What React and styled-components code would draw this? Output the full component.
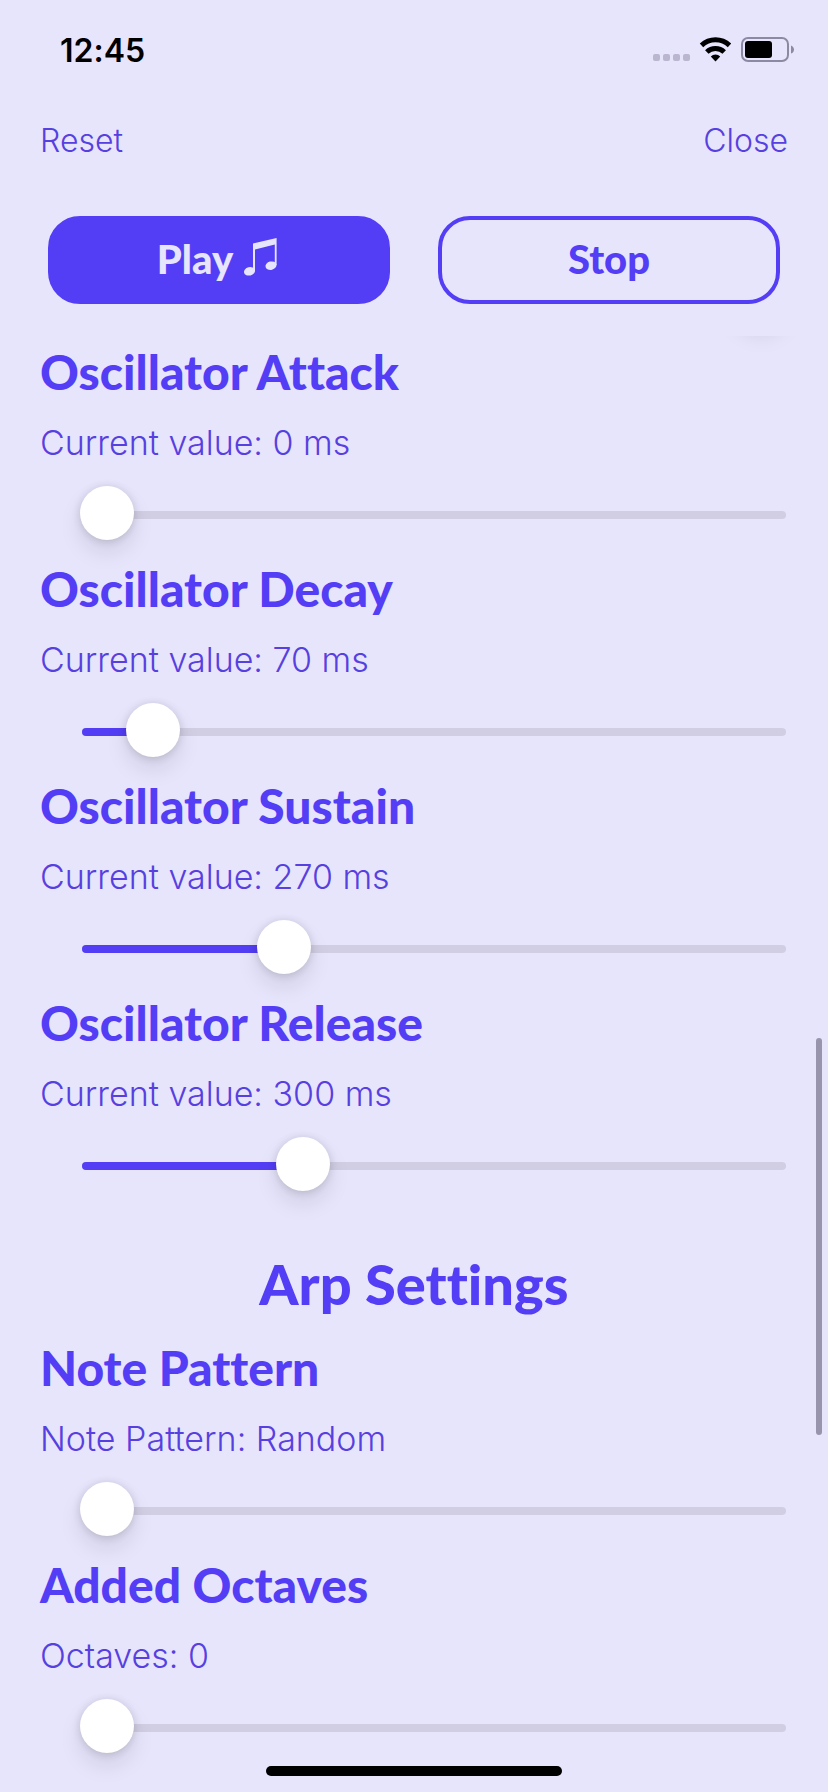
import React from 'react';
import styled, { createGlobalStyle } from 'styled-components';

const COLORS = {
	background: '#e7e5fc',
	primary: '#543ef5',
	text: '#5740e0',
	track: '#d1cee4',
	scrollbar: '#9894ad',
	signal: '#bab6d0',
	battery: '#8d89a2',
	white: '#ffffff',
	black: '#000000',
};

const FONTS = {
	heading: "Lato, 'Open Sans', sans-serif",
	body: "Inter, 'Open Sans', sans-serif",
};

const THUMB_SIZE = 54;

const OSCILLATOR = [
	{ id: 'attack', title: 'Oscillator Attack', value: 0 },
	{ id: 'decay', title: 'Oscillator Decay', value: 70 },
	{ id: 'sustain', title: 'Oscillator Sustain', value: 270 },
	{ id: 'release', title: 'Oscillator Release', value: 300 },
];

const PATTERNS = ['Random', 'Up', 'Down', 'Up & Down'];

const Setting = ({ id, title, initial, max, format }) => {
	const [value, setValue] = React.useState(initial);
	const ratio = value / max;

	return (
		<SettingWrapper>
			<SettingTitle>
				<label htmlFor={id}>{title}</label>
			</SettingTitle>
			<Caption>{format(value)}</Caption>
			<SliderWrapper>
				<Track>
					<Fill style={{ width: `${ratio * 100}%` }} />
				</Track>
				<Range
					id={id}
					type="range"
					min={0}
					max={max}
					value={value}
					onChange={(event) => setValue(Number(event.target.value))}
				/>
			</SliderWrapper>
		</SettingWrapper>
	);
};

const StatusIcons = () => (
	<svg width="142" height="26" viewBox="0 0 142 26" aria-hidden="true">
		<g fill={COLORS.signal}>
			<rect x="0" y="17" width="7" height="7" rx="2" />
			<rect x="10" y="17" width="7" height="7" rx="2" />
			<rect x="20" y="17" width="7" height="7" rx="2" />
			<rect x="30" y="17" width="7" height="7" rx="2" />
		</g>
		<g fill="none" stroke={COLORS.black} strokeWidth="5">
			<path d="M48.5 8.4A20.4 20.4 0 0 1 76.5 8.4" />
			<path d="M53.8 15A12.6 12.6 0 0 1 71.2 15" />
		</g>
		<path d="M62.5 24.4L57.8 19.4A6.8 6.8 0 0 1 67.2 19.4Z" fill={COLORS.black} />
		<rect
			x="89"
			y="1"
			width="46"
			height="23"
			rx="6"
			fill="none"
			stroke={COLORS.battery}
			strokeWidth="2"
		/>
		<rect x="92" y="4" width="27" height="17" rx="3" fill={COLORS.black} />
		<path d="M138 8.4C142 10 142 15 138 16.6Z" fill={COLORS.battery} />
	</svg>
);

const NoteIcon = () => (
	<svg width="38" height="46" viewBox="0 0 38 46" aria-hidden="true">
		<g fill="currentColor">
			<path d="M10 7.5L33.6 2V29H31.8V8.6L12 13.4V35H10Z" />
			<ellipse cx="6.5" cy="35.3" rx="5.6" ry="4.2" transform="rotate(-14 6.5 35.3)" />
			<ellipse cx="28" cy="29.7" rx="5.6" ry="4.2" transform="rotate(-14 28 29.7)" />
		</g>
	</svg>
);

const App = () => {
	return (
		<>
			<GlobalStyle />
			<Page>
				<StatusBar>
					<Time>12:45</Time>
					<StatusIcons />
				</StatusBar>
				<Header>
					<TextButton type="button">Reset</TextButton>
					<TextButton type="button">Close</TextButton>
				</Header>
				<Controls>
					<PlayButton type="button">
						Play <NoteIcon />
					</PlayButton>
					<StopButton type="button">Stop</StopButton>
				</Controls>
				<ScrollArea>
					<ScrolledThumb />
					{OSCILLATOR.map(({ id, title, value }) => (
						<Setting
							key={id}
							id={id}
							title={title}
							initial={value}
							max={1000}
							format={(ms) => `Current value: ${ms} ms`}
						/>
					))}
					<SectionTitle>Arp Settings</SectionTitle>
					<Setting
						id="pattern"
						title="Note Pattern"
						initial={0}
						max={3}
						format={(index) => `Note Pattern: ${PATTERNS[index]}`}
					/>
					<Setting
						id="octaves"
						title="Added Octaves"
						initial={0}
						max={3}
						format={(count) => `Octaves: ${count}`}
					/>
					<Scrollbar />
				</ScrollArea>
				<HomeIndicator />
			</Page>
		</>
	);
};

const GlobalStyle = createGlobalStyle`
	*,
	*::before,
	*::after {
		box-sizing: border-box;
	}

	body {
		margin: 0;
		background-color: ${COLORS.background};
	}

	h2,
	h3,
	p {
		margin: 0;
	}
`;

const Page = styled.div`
	position: relative;
	display: flex;
	flex-direction: column;
	height: 100vh;
	overflow: hidden;
	color: ${COLORS.primary};
	font-family: ${FONTS.body};
	font-variant-ligatures: none;
`;

const StatusBar = styled.div`
	display: flex;
	flex-shrink: 0;
	justify-content: space-between;
	align-items: center;
	height: 100px;
	padding: 0 33px 0 60px;
`;

const Time = styled.span`
	color: ${COLORS.black};
	font-size: 32px;
	font-weight: 600;
`;

const Header = styled.header`
	display: flex;
	flex-shrink: 0;
	justify-content: space-between;
	align-items: center;
	height: 82px;
	padding: 0 40px;
`;

const TextButton = styled.button`
	padding: 0;
	border: none;
	background: none;
	color: ${COLORS.text};
	font-family: ${FONTS.body};
	font-size: 32px;
	font-weight: 300;
	line-height: 44px;
	cursor: pointer;
`;

const Controls = styled.div`
	display: flex;
	flex-shrink: 0;
	gap: 48px;
	padding: 34px 48px 32px;
`;

const ControlButton = styled.button`
	display: flex;
	flex: 1;
	justify-content: center;
	align-items: center;
	gap: 10px;
	height: 88px;
	padding: 0 0 2px;
	border: 4px solid ${COLORS.primary};
	border-radius: 32px;
	font-family: ${FONTS.heading};
	font-size: 40px;
	font-weight: 900;
	cursor: pointer;
`;

const PlayButton = styled(ControlButton)`
	background-color: ${COLORS.primary};
	color: ${COLORS.background};
`;

const StopButton = styled(ControlButton)`
	background-color: transparent;
	color: ${COLORS.primary};
`;

const ScrollArea = styled.main`
	position: relative;
	display: flex;
	flex: 1;
	flex-direction: column;
	gap: 21px;
	min-height: 0;
	padding: 0 40px;
	overflow: hidden;
`;

const thumbStyles = `
	width: ${THUMB_SIZE}px;
	height: ${THUMB_SIZE}px;
	border: none;
	border-radius: 50%;
	background-color: ${COLORS.white};
	box-shadow: 0 12px 22px rgba(0, 0, 0, 0.1), 0 1px 8px rgba(0, 0, 0, 0.15);
`;

// Handle of the slider just above the fold, only its shadow is still visible
const ScrolledThumb = styled.div`
	${thumbStyles}
	flex-shrink: 0;
	align-self: flex-end;
	margin-top: -67px;
`;

const SectionTitle = styled.h2`
	margin-top: 37px;
	font-family: ${FONTS.heading};
	font-size: 56px;
	font-weight: 900;
	line-height: 70px;
	text-align: center;
`;

const SettingWrapper = styled.section`
	display: flex;
	flex-shrink: 0;
	flex-direction: column;
	gap: 21px;
`;

const SettingTitle = styled.h3`
	font-family: ${FONTS.heading};
	font-size: 48px;
	font-weight: 900;
	line-height: 56px;
`;

const Caption = styled.p`
	color: ${COLORS.text};
	font-size: 34px;
	font-weight: 300;
	line-height: 44px;
`;

const SliderWrapper = styled.div`
	display: grid;
	align-items: center;
	margin-left: 40px;
`;

const Track = styled.div`
	grid-area: 1 / 1;
	height: 8px;
	margin: 4px 2px 0;
	border-radius: 4px;
	background-color: ${COLORS.track};
`;

const Fill = styled.div`
	height: 100%;
	border-radius: 4px;
	background-color: ${COLORS.primary};
`;

const Range = styled.input`
	grid-area: 1 / 1;
	z-index: 1;
	width: 100%;
	height: ${THUMB_SIZE}px;
	margin: 0;
	appearance: none;
	background: transparent;
	cursor: pointer;

	&::-webkit-slider-thumb {
		appearance: none;
		${thumbStyles}
	}

	&::-moz-range-thumb {
		${thumbStyles}
	}
`;

const Scrollbar = styled.div`
	position: absolute;
	top: 702px;
	right: 6px;
	width: 6px;
	height: 397px;
	border-radius: 3px;
	background-color: ${COLORS.scrollbar};
`;

const HomeIndicator = styled.div`
	position: absolute;
	z-index: 2;
	bottom: 16px;
	left: 50%;
	width: 296px;
	height: 10px;
	margin-left: -148px;
	border-radius: 5px;
	background-color: ${COLORS.black};
`;

export default App;
